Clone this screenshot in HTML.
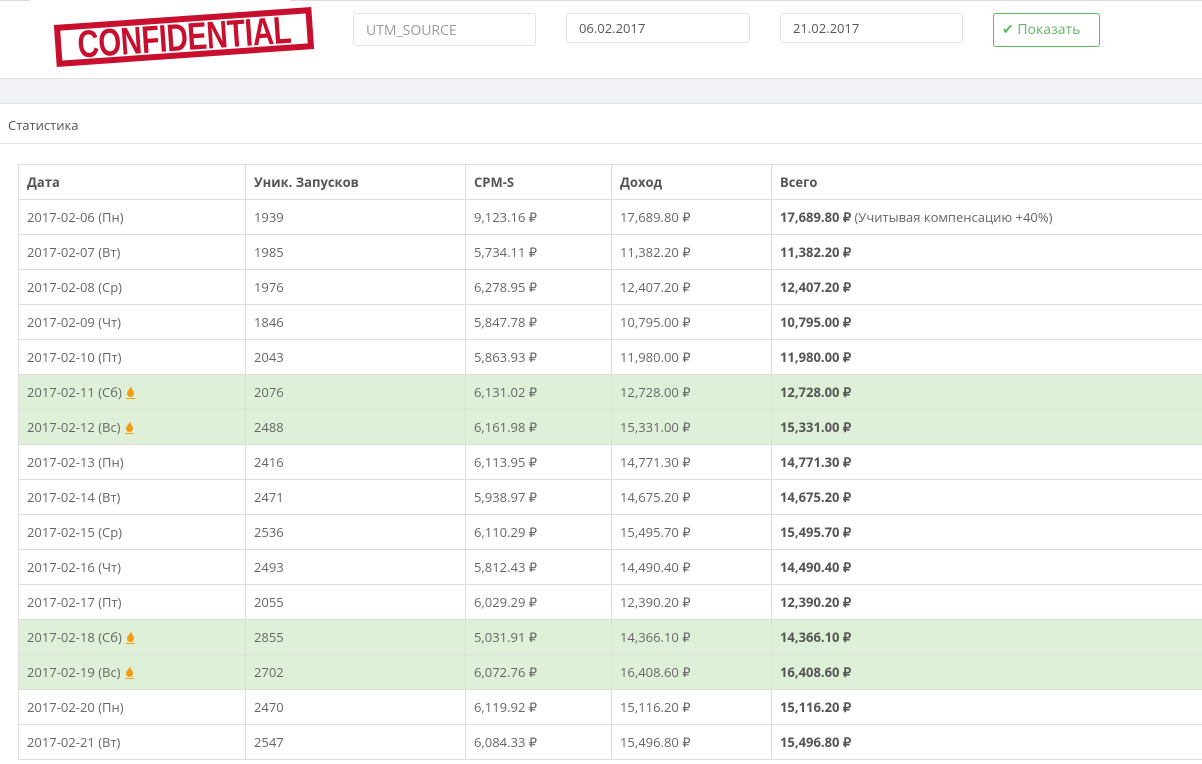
<!DOCTYPE html>
<html><head><meta charset="utf-8"><style>
body{margin:0;width:1202px;height:764px;overflow:hidden;background:#fff;font-family:"Open Sans","Liberation Sans",sans-serif;font-size:13px;color:#666;position:relative}
.abs{position:absolute}
.inp{position:absolute;border:1px solid #e3e3e3;border-radius:3px;box-sizing:border-box;padding:0 12px;font-size:13px;color:#555}
.stamp{position:absolute;left:55px;top:16px;width:258px;height:42px;border:6px solid #c8102e;box-sizing:border-box;transform:rotate(-4deg);color:#c8102e;font:bold 32px/30px "Liberation Sans",sans-serif;text-align:center;transform-origin:center;overflow:hidden}
table{position:absolute;left:18px;top:164px;border-collapse:collapse;width:1200px}
td,th{border:1px solid #ddd;height:34px;padding:0 8px;text-align:left;font-size:13px;white-space:nowrap}
th{color:#555;font-weight:bold}
tr.g td{background:#dff0d8}
.f{display:inline-block;vertical-align:-2px;margin-left:1px}
b{color:#555}
</style></head><body>
<div class="abs" style="left:0;top:0;width:30px;height:1px;background:#ddd"></div>
<div class="abs" style="left:290px;top:0;width:912px;height:1px;background:#ddd"></div>
<div class="stamp"><span style="display:inline-block;transform:scale(0.92,1.2);letter-spacing:-0.5px">CONFIDENTIAL</span></div>
<div class="inp" style="left:353px;top:13px;width:183px;height:33px;line-height:33px;color:#999;font-size:14px">UTM_SOURCE</div>
<div class="inp" style="left:566px;top:13px;width:184px;height:30px;line-height:28px">06.02.2017</div>
<div class="inp" style="left:780px;top:13px;width:183px;height:30px;line-height:28px">21.02.2017</div>
<div class="inp" style="left:993px;top:13px;width:107px;height:34px;line-height:32px;border-color:#5cb85c;color:#5cb85c;font-size:14px;padding:0 8px">✔ Показать</div>
<div class="abs" style="left:0;top:78px;width:1202px;height:26px;background:#f1f2f5;border-top:1px solid #e2e2e2;border-bottom:1px solid #e2e2e2;box-sizing:border-box"></div>
<div class="abs" style="left:8px;top:116px;color:#555">Статистика</div>
<div class="abs" style="left:0;top:143px;width:1202px;height:1px;background:#e5e5e5"></div>
<table>
<colgroup><col style="width:227px"><col style="width:220px"><col style="width:146px"><col style="width:160px"><col></colgroup>
<tr><th>Дата</th><th>Уник. Запусков</th><th>CPM-S</th><th>Доход</th><th>Всего</th></tr>
<tr><td>2017-02-06 (Пн)</td><td>1939</td><td>9,123.16 ₽</td><td>17,689.80 ₽</td><td><b>17,689.80 ₽</b> (Учитывая компенсацию +40%)</td></tr>
<tr><td>2017-02-07 (Вт)</td><td>1985</td><td>5,734.11 ₽</td><td>11,382.20 ₽</td><td><b>11,382.20 ₽</b></td></tr>
<tr><td>2017-02-08 (Ср)</td><td>1976</td><td>6,278.95 ₽</td><td>12,407.20 ₽</td><td><b>12,407.20 ₽</b></td></tr>
<tr><td>2017-02-09 (Чт)</td><td>1846</td><td>5,847.78 ₽</td><td>10,795.00 ₽</td><td><b>10,795.00 ₽</b></td></tr>
<tr><td>2017-02-10 (Пт)</td><td>2043</td><td>5,863.93 ₽</td><td>11,980.00 ₽</td><td><b>11,980.00 ₽</b></td></tr>
<tr class="g"><td>2017-02-11 (Сб) <svg class="f" width="9" height="13" viewBox="0 0 9 13"><path d="M5 0C5 3 1 4 1 7.5C1 9.5 2.5 11 4.5 11C6.5 11 8 9.5 8 7.5C8 5 6 4 5 0Z" fill="#f39c12"/><path d="M0 12.5H9" stroke="#f39c12"/></svg></td><td>2076</td><td>6,131.02 ₽</td><td>12,728.00 ₽</td><td><b>12,728.00 ₽</b></td></tr>
<tr class="g"><td>2017-02-12 (Вс) <svg class="f" width="9" height="13" viewBox="0 0 9 13"><path d="M5 0C5 3 1 4 1 7.5C1 9.5 2.5 11 4.5 11C6.5 11 8 9.5 8 7.5C8 5 6 4 5 0Z" fill="#f39c12"/><path d="M0 12.5H9" stroke="#f39c12"/></svg></td><td>2488</td><td>6,161.98 ₽</td><td>15,331.00 ₽</td><td><b>15,331.00 ₽</b></td></tr>
<tr><td>2017-02-13 (Пн)</td><td>2416</td><td>6,113.95 ₽</td><td>14,771.30 ₽</td><td><b>14,771.30 ₽</b></td></tr>
<tr><td>2017-02-14 (Вт)</td><td>2471</td><td>5,938.97 ₽</td><td>14,675.20 ₽</td><td><b>14,675.20 ₽</b></td></tr>
<tr><td>2017-02-15 (Ср)</td><td>2536</td><td>6,110.29 ₽</td><td>15,495.70 ₽</td><td><b>15,495.70 ₽</b></td></tr>
<tr><td>2017-02-16 (Чт)</td><td>2493</td><td>5,812.43 ₽</td><td>14,490.40 ₽</td><td><b>14,490.40 ₽</b></td></tr>
<tr><td>2017-02-17 (Пт)</td><td>2055</td><td>6,029.29 ₽</td><td>12,390.20 ₽</td><td><b>12,390.20 ₽</b></td></tr>
<tr class="g"><td>2017-02-18 (Сб) <svg class="f" width="9" height="13" viewBox="0 0 9 13"><path d="M5 0C5 3 1 4 1 7.5C1 9.5 2.5 11 4.5 11C6.5 11 8 9.5 8 7.5C8 5 6 4 5 0Z" fill="#f39c12"/><path d="M0 12.5H9" stroke="#f39c12"/></svg></td><td>2855</td><td>5,031.91 ₽</td><td>14,366.10 ₽</td><td><b>14,366.10 ₽</b></td></tr>
<tr class="g"><td>2017-02-19 (Вс) <svg class="f" width="9" height="13" viewBox="0 0 9 13"><path d="M5 0C5 3 1 4 1 7.5C1 9.5 2.5 11 4.5 11C6.5 11 8 9.5 8 7.5C8 5 6 4 5 0Z" fill="#f39c12"/><path d="M0 12.5H9" stroke="#f39c12"/></svg></td><td>2702</td><td>6,072.76 ₽</td><td>16,408.60 ₽</td><td><b>16,408.60 ₽</b></td></tr>
<tr><td>2017-02-20 (Пн)</td><td>2470</td><td>6,119.92 ₽</td><td>15,116.20 ₽</td><td><b>15,116.20 ₽</b></td></tr>
<tr><td>2017-02-21 (Вт)</td><td>2547</td><td>6,084.33 ₽</td><td>15,496.80 ₽</td><td><b>15,496.80 ₽</b></td></tr>
</table>
</body></html>
